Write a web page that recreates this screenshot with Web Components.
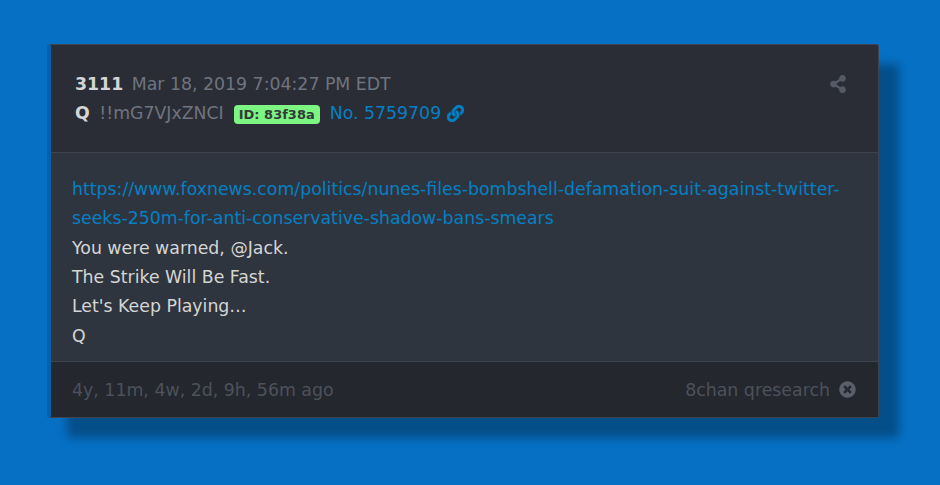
<!DOCTYPE html>
<html><head><meta charset="utf-8"><style>
html,body{margin:0;padding:0;background:#0670c4;height:100%;overflow:hidden}
body{font-family:"DejaVu Sans",sans-serif;}
</style></head><body>
<template id="t-card"><style>
:host{display:block;box-sizing:border-box;width:832px;margin:44px 0 0 47px;background:#2f353e;border:1px solid #3e434e;border-left:4px solid #0760ad;border-radius:3px;box-shadow:20px 20px 10px rgba(0,0,0,.3)}
</style><slot name="head"></slot><slot name="body"></slot><slot name="foot"></slot></template>

<template id="t-head"><style>
:host{display:flex;justify-content:space-between;box-sizing:border-box;height:108px;padding:25px 32px 0 24px;background:#2a2d35;border-bottom:1px solid #3e434e;font-size:17.33px;line-height:29px;color:#6f7480}
b{color:#d5d5d5;font-weight:700}
.r{display:flex;align-items:center}
.n{margin-right:8.5px}
.q{margin-right:9.5px}
.id{align-self:flex-start;margin:6px 10px 0;background:#7cf582;color:#333b3a;font-size:13px;font-weight:700;line-height:19px;height:19px;border-radius:4px;padding:0 5px}
a{color:#0480c4;text-decoration:none}
svg{display:block}
.share{margin-top:5px}
</style><div><div class="r"><b class="n">3111</b><span>Mar 18, 2019 7:04:27 PM EDT</span></div>
<div class="r"><b class="q">Q</b><span>!!mG7VJxZNCI</span><span class="id">ID: 83f38a</span><a href="#">No. 5759709</a>
<svg style="margin-left:6px" width="17" height="17" viewBox="0 0 512 512"><path fill="#0480c4" stroke="#0480c4" stroke-width="14" d="M326.6 185.4c59.7 59.8 58.9 155.7.4 214.6l-67.2 67.2c-59.3 59.3-155.7 59.3-215 0-59.3-59.3-59.3-155.7 0-215l37.1-37.1c9.8-9.8 26.8-3.3 27.3 10.6.6 17.7 3.8 35.5 9.7 52.7 2 5.8.6 12.3-3.8 16.6l-13.1 13.1c-28 28-28.9 73.7-1.2 102 28 28.6 74.1 28.7 102.3.5l67.2-67.2c28.2-28.2 28.1-73.8 0-101.8-3.7-3.7-7.4-6.6-10.3-8.6-4.1-2.8-6.6-7.3-6.8-12.3-.4-10.6 3.4-21.5 11.8-29.9l21-21c5.5-5.5 14.2-6.2 20.5-1.8 7.3 5.1 14.1 10.8 20.4 17.1zM467.5 44.4c-59.3-59.3-155.7-59.3-215 0l-67.2 67.2-.4.4c-58.5 58.9-59.3 154.8.4 214.6 6.3 6.3 13.1 12 20.4 17.1 6.3 4.4 15 3.7 20.5-1.8l21-21c8.4-8.4 12.2-19.3 11.8-29.9-.2-5-2.7-9.5-6.8-12.3-2.9-2-6.6-4.9-10.3-8.6-28.1-28-28.2-73.6 0-101.8l67.2-67.2c28.2-28.2 74.3-28.1 102.3.5 27.7 28.3 26.8 74-1.2 102l-13.1 13.1c-4.4 4.3-5.8 10.8-3.8 16.6 5.9 17.2 9.1 35 9.7 52.7.5 13.9 17.5 20.4 27.3 10.6l37.1-37.1c59.3-59.3 59.3-155.7 0-215z"/></svg></div></div>
<svg class="share" width="16" height="18" viewBox="0 0 448 512"><path fill="#555a66" d="M352 320c-22.6 0-43.4 7.8-59.8 20.9l-102.5-64.1a96.6 96.6 0 0 0 0-41.7l102.5-64.1C308.600 184.200 329.400 192 352 192c53 0 96-43 96-96S405 0 352 0s-96 43-96 96c0 7.200.8 14.100 2.300 20.800l-102.500 64.100C139.400 167.800 118.600 160 96 160c-53 0-96 43-96 96s43 96 96 96c22.600 0 43.400-7.800 59.800-20.900l102.500 64.100A96.300 96.300 0 0 0 256 416c0 53 43 96 96 96s96-43 96-96-43-96-96-96z"/></svg>
</template>

<template id="t-body"><style>
:host{display:block;box-sizing:border-box;height:208px;padding:22px 21px 0;font-size:17.34px;line-height:29.35px;color:#d5d5d5}
</style><slot></slot></template>

<template id="t-foot"><style>
:host{display:flex;justify-content:space-between;align-items:center;box-sizing:border-box;height:56px;padding:0 22px 0 21px;background:#24272e;border-top:1px solid #3e434e;font-size:17.36px;color:#4d515b}
.r{display:flex;align-items:center;gap:9px}
</style><span>4y, 11m, 4w, 2d, 9h, 56m ago</span><span class="r">8chan qresearch
<svg width="17" height="17" viewBox="0 0 512 512"><path fill="#5a5f6b" d="M256 8C119 8 8 119 8 256s111 248 248 248 248-111 248-248S393 8 256 8zm121.600 313.100c4.700 4.700 4.700 12.300 0 17L338 377.600c-4.700 4.700-12.300 4.700-17 0L256 312l-65.100 65.600c-4.700 4.700-12.300 4.700-17 0L134.400 338c-4.700-4.700-4.700-12.300 0-17l65.600-65-65.600-65.100c-4.700-4.700-4.700-12.300 0-17l39.600-39.600c4.700-4.700 12.300-4.700 17 0l65 65.700 65.100-65.600c4.700-4.700 12.300-4.700 17 0l39.600 39.600c4.700 4.700 4.700 12.300 0 17L312 256l65.600 65.100z"/></svg></span></template>

<template id="t-line"><style>:host{display:block}</style><slot></slot></template>

<q-card>
<q-head slot="head"></q-head>
<q-body slot="body"><a href="#" style="color:#0480c4;text-decoration:none;display:block">https://www.foxnews.com/politics/nunes-files-bombshell-defamation-suit-against-twitter-<br>seeks-250m-for-anti-conservative-shadow-bans-smears</a>
<q-line>You were warned, @Jack.</q-line>
<q-line>The Strike Will Be Fast.</q-line>
<q-line>Let's Keep Playing…</q-line>
<q-line>Q</q-line></q-body>
<q-foot slot="foot"></q-foot>
</q-card>
<script>
for(const [n,t] of [['q-card','t-card'],['q-head','t-head'],['q-body','t-body'],['q-foot','t-foot'],['q-line','t-line']]){
customElements.define(n,class extends HTMLElement{constructor(){super();this.attachShadow({mode:'open'}).appendChild(document.getElementById(t).content.cloneNode(true));}});
}
</script>
</body></html>
